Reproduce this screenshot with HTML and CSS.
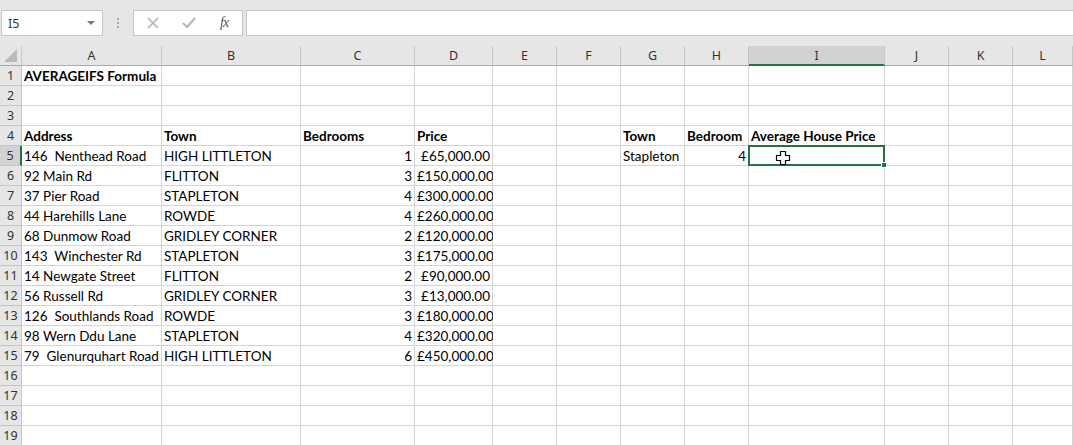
FILE: index.html
```html
<!DOCTYPE html>
<html>
<head>
<meta charset="utf-8">
<link rel="stylesheet" href="styles.css">
</head>
<body>
<div class="app">
  <div class="fbar">
    <div class="namebox"><span class="nb-text">I5</span><span class="nb-arrow"></span></div>
    <div class="dots"><i></i><i></i><i></i></div>
    <div class="fbtns">
      <svg class="ic ic-x" width="12" height="12" viewBox="0 0 12 12"><path d="M1 1 L11 11 M11 1 L1 11" stroke="#b4b4b4" stroke-width="1.6" fill="none"/></svg>
      <svg class="ic ic-v" width="14" height="12" viewBox="0 0 14 12"><path d="M1 6 L5 10 L13 1" stroke="#b4b4b4" stroke-width="2" fill="none"/></svg>
      <span class="fx">fx</span>
    </div>
    <div class="finput"></div>
  </div>
  <div class="sheet" id="sheet"></div>
</div>
<script src="app.js"></script>
</body>
</html>
```
FILE: app.js
```js
const cols = ["A","B","C","D","E","F","G","H","I","J","K","L"];
const data = {
  1: {A: ["AVERAGEIFS Formula","b"]},
  4: {A:["Address","b"],B:["Town","b"],C:["Bedrooms","b"],D:["Price","b"],G:["Town","b"],H:["Bedroom","b"],I:["Average House Price","b"]},
  5: {A:["146  Nenthead Road"],B:["HIGH LITTLETON"],C:["1","r"],D:["£65,000.00","r"],G:["Stapleton"],H:["4","r"]},
  6: {A:["92 Main Rd"],B:["FLITTON"],C:["3","r"],D:["£150,000.00","r"]},
  7: {A:["37 Pier Road"],B:["STAPLETON"],C:["4","r"],D:["£300,000.00","r"]},
  8: {A:["44 Harehills Lane"],B:["ROWDE"],C:["4","r"],D:["£260,000.00","r"]},
  9: {A:["68 Dunmow Road"],B:["GRIDLEY CORNER"],C:["2","r"],D:["£120,000.00","r"]},
  10: {A:["143  Winchester Rd"],B:["STAPLETON"],C:["3","r"],D:["£175,000.00","r"]},
  11: {A:["14 Newgate Street"],B:["FLITTON"],C:["2","r"],D:["£90,000.00","r"]},
  12: {A:["56 Russell Rd"],B:["GRIDLEY CORNER"],C:["3","r"],D:["£13,000.00","r"]},
  13: {A:["126  Southlands Road"],B:["ROWDE"],C:["3","r"],D:["£180,000.00","r"]},
  14: {A:["98 Wern Ddu Lane"],B:["STAPLETON"],C:["4","r"],D:["£320,000.00","r"]},
  15: {A:["79  Glenurquhart Road"],B:["HIGH LITTLETON"],C:["6","r"],D:["£450,000.00","r"]}
};
const s = document.getElementById("sheet");
let h = '<div class="corner"><span class="tri"></span></div>';
cols.forEach(c => { h += '<div class="ch' + (c==="I"?" sel":"") + '">' + c + '</div>'; });
for (let r = 1; r <= 19; r++) {
  h += '<div class="rh' + (r===5?" sel":"") + '">' + r + '</div>';
  cols.forEach(c => {
    const v = data[r] && data[r][c];
    let cls = "cell";
    let txt = "";
    if (v) { txt = v[0]; if (v[1]==="b") cls += " bold"; if (v[1]==="r") cls += " right"; }
    let extra = "";
    if (r===5 && c==="I") {
      cls += " active";
      extra = '<span class="handle"></span><svg class="cursor" width="16" height="16" viewBox="0 0 16 16"><path d="M5.5 1.5 H10.5 V5.5 H14.5 V10.5 H10.5 V14.5 H5.5 V10.5 H1.5 V5.5 H5.5 Z" fill="#fff" stroke="#000" stroke-width="1.2"/></svg>';
    }
    h += '<div class="' + cls + '">' + txt + extra + '</div>';
  });
}
s.innerHTML = h;
```
FILE: styles.css
```css
* { box-sizing: border-box; }
html, body { margin: 0; padding: 0; }
body { background: #e6e6e6; width: 1073px; height: 445px; overflow: hidden; font-family: "Lato", "Liberation Sans", sans-serif; }
.app { display: flex; flex-direction: column; }
.fbar { height: 46px; display: flex; align-items: flex-start; padding-top: 10px; padding-left: 1px; }
.namebox { width: 102px; height: 26px; background: #fff; border: 1px solid #c6c6c6; display: flex; align-items: center; justify-content: space-between; padding: 0 7px 0 6px; }
.nb-text { font-family: "Noto Sans", sans-serif; font-size: 12.5px; color: #333; }
.nb-arrow { width: 0; height: 0; border-left: 4px solid transparent; border-right: 4px solid transparent; border-top: 4px solid #777; }
.dots { width: 30px; height: 26px; display: flex; flex-direction: column; align-items: center; justify-content: center; gap: 2px; }
.dots i { display: block; width: 2px; height: 2px; background: #aaa; }
.fbtns { width: 110px; height: 26px; background: #fff; border: 1px solid #c6c6c6; display: flex; align-items: center; padding-left: 13px; }
.ic-x { margin-right: 23px; }
.ic-v { margin-right: 24px; }
.fx { font-family: "Liberation Serif", serif; font-style: italic; font-size: 14px; color: #555; letter-spacing: -1px; }
.finput { flex: 1; height: 26px; background: #fff; border: 1px solid #c6c6c6; border-right: none; margin-left: 3px; }
.sheet { display: grid; grid-template-columns: 22px 140px 139px 114px 78px 64px 64px 64px 64px 136px 64px 64px 1fr; grid-auto-rows: 20px; grid-template-rows: 20px; }
.corner { position: relative; border-right: 1px solid #c6c6c6; border-bottom: 1px solid #ababab; }
.tri { position: absolute; right: 4px; bottom: 3px; width: 0; height: 0; border-left: 13px solid transparent; border-bottom: 13px solid #b9b9b9; }
.ch { border-right: 1px solid #c6c6c6; border-bottom: 1px solid #ababab; font-family: "Noto Sans", sans-serif; font-size: 12.5px; color: #333; text-align: center; line-height: 19px; }
.ch.sel { background: #d2d2d2; border-bottom: 2px solid #217346; }
.rh { border-right: 1px solid #c6c6c6; border-bottom: 1px solid #c6c6c6; font-family: "Noto Sans", sans-serif; font-size: 12.5px; color: #333; text-align: center; line-height: 19px; }
.rh.sel { background: #d2d2d2; border-right: 2px solid #217346; }
.cell { position: relative; background: #fff; border-right: 1px solid #d4d4d4; border-bottom: 1px solid #d4d4d4; font-size: 13.5px; color: #000; white-space: pre; padding: 0 2px 0 2px; line-height: 20px; }
.cell.bold { font-weight: bold; }
.cell.right { text-align: right; }
.cell.active::after { content: ""; position: absolute; left: -1px; top: -1px; right: -1px; bottom: -1px; border: 2px solid #217346; pointer-events: none; }
.handle { position: absolute; right: -3px; bottom: -3px; width: 6px; height: 6px; background: #217346; border: 1px solid #fff; z-index: 2; }
.cursor { position: absolute; left: 26px; top: 4px; z-index: 3; }
```
